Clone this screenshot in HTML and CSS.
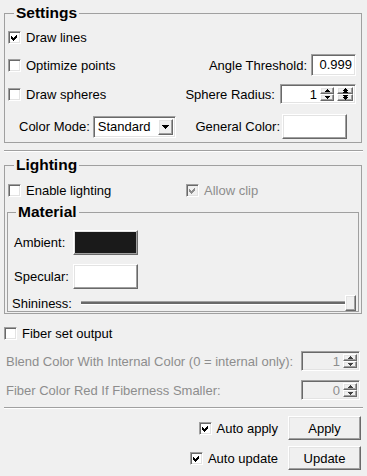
FILE: index.html
```html
<!DOCTYPE html>
<html lang="en">
    <head>
        <meta charset="UTF-8">
        <title>Fiber Settings</title>
        <link rel="stylesheet" href="styles.css">
    </head>
    <body>
        <div class="panel">
            <fieldset class="group">
                <legend>Settings</legend>
                <div class="inner settings">
                    <div class="row r1">
                        <label class="check"><span class="cb"><svg viewBox="0 0 7 7" width="7" height="7"><path d="M0 2L2 4L6 0V3L2 7L0 5Z"/></svg></span>Draw lines</label>
                    </div>
                    <div class="row r2">
                        <label class="check"><span class="cb"></span>Optimize points</label>
                        <div class="field">
                            <span>Angle Threshold:</span>
                            <span class="edit sunken">0.999</span>
                        </div>
                    </div>
                    <div class="row r3">
                        <label class="check"><span class="cb"></span>Draw spheres</label>
                        <div class="field gap5">
                            <span>Sphere Radius:</span>
                            <span class="spin sunken radius">
                                <span class="spin-val">1</span>
                                <span class="spin-btns">
                                    <span class="raised"><svg viewBox="0 0 5 3" width="5" height="3"><path d="M2.5 0L5 3H0Z"/></svg></span>
                                    <span class="raised"><svg viewBox="0 0 5 3" width="5" height="3"><path d="M0 0H5L2.5 3Z"/></svg></span>
                                </span>
                                <span class="spin-btns page">
                                    <span class="raised"><svg viewBox="0 0 7 5" width="7" height="5"><path d="M3.5 0L7 3H0Z M3.5 2L7 5H0Z"/></svg></span>
                                    <span class="raised"><svg viewBox="0 0 7 5" width="7" height="5"><path d="M0 0H7L3.5 3Z M0 2H7L3.5 5Z"/></svg></span>
                                </span>
                            </span>
                        </div>
                    </div>
                    <div class="row r4">
                        <div class="field mode">
                            <span>Color Mode:</span>
                            <span class="combo sunken">
                                <span class="combo-val">Standard</span>
                                <span class="combo-btn raised"><svg viewBox="0 0 7 4" width="7" height="4"><path d="M0 0H7L3.5 4Z"/></svg></span>
                            </span>
                        </div>
                        <div class="field general">
                            <span>General Color:</span>
                            <span class="color-btn raised white"></span>
                        </div>
                    </div>
                </div>
            </fieldset>

            <div class="sep top-sep"></div>

            <fieldset class="group lighting">
                <legend>Lighting</legend>
                <div class="inner">
                    <div class="row enable">
                        <label class="check first"><span class="cb"></span>Enable lighting</label>
                        <label class="check disabled"><span class="cb"><svg viewBox="0 0 7 7" width="7" height="7"><path d="M0 2L2 4L6 0V3L2 7L0 5Z"/></svg></span>Allow clip</label>
                    </div>
                    <fieldset class="group material">
                        <legend>Material</legend>
                        <div class="inner mat">
                            <div class="mrow">
                                <span class="mlabel">Ambient:</span>
                                <span class="color-btn raised black"></span>
                            </div>
                            <div class="mrow spec">
                                <span class="mlabel">Specular:</span>
                                <span class="color-btn raised white"></span>
                            </div>
                            <div class="mrow shine">
                                <span>Shininess:</span>
                                <span class="slider">
                                    <span class="groove"></span>
                                    <span class="handle raised"></span>
                                </span>
                            </div>
                        </div>
                    </fieldset>
                </div>
            </fieldset>

            <div class="row fiber">
                <label class="check"><span class="cb"></span>Fiber set output</label>
            </div>
            <div class="row dim blend">
                <span>Blend Color With Internal Color (0 = internal only):</span>
                <span class="spin sunken off">
                    <span class="spin-val">1</span>
                    <span class="spin-btns">
                        <span class="raised"><svg viewBox="0 0 5 3" width="5" height="3"><path d="M2.5 0L5 3H0Z"/></svg></span>
                        <span class="raised"><svg viewBox="0 0 5 3" width="5" height="3"><path d="M0 0H5L2.5 3Z"/></svg></span>
                    </span>
                </span>
            </div>
            <div class="row dim fcol">
                <span>Fiber Color Red If Fiberness Smaller:</span>
                <span class="spin sunken off">
                    <span class="spin-val">0</span>
                    <span class="spin-btns">
                        <span class="raised"><svg viewBox="0 0 5 3" width="5" height="3"><path d="M2.5 0L5 3H0Z"/></svg></span>
                        <span class="raised"><svg viewBox="0 0 5 3" width="5" height="3"><path d="M0 0H5L2.5 3Z"/></svg></span>
                    </span>
                </span>
            </div>

            <div class="sep bottom-sep"></div>

            <div class="act apply-row">
                <label class="check"><span class="cb"><svg viewBox="0 0 7 7" width="7" height="7"><path d="M0 2L2 4L6 0V3L2 7L0 5Z"/></svg></span>Auto apply</label>
                <button class="btn raised">Apply</button>
            </div>
            <div class="act update-row">
                <label class="check"><span class="cb"><svg viewBox="0 0 7 7" width="7" height="7"><path d="M0 2L2 4L6 0V3L2 7L0 5Z"/></svg></span>Auto update</label>
                <button class="btn raised">Update</button>
            </div>
        </div>
    </body>
</html>
```

FILE: styles.css
```css
* {
    box-sizing: border-box;
}
body {
    margin: 0;
    background-color: #f0f0f0;
    font: 13px "Liberation Sans", Arial, sans-serif;
    color: #000;
}
svg {
    display: block;
    shape-rendering: crispEdges;
}
.panel {
    width: 367px;
    height: 476px;
    padding: 4px 5px 0 4px;
}

/* group boxes */
.group {
    margin: 0;
    padding: 0;
    min-width: 0;
    border: 1px solid #a0a0a0;
}
.group > legend {
    margin-left: 9px;
    padding: 0 2px;
    font: bold 15.5px/18px "Liberation Sans", Arial, sans-serif;
}
.settings {
    padding: 4px 5px 3px 3px;
}
.row {
    display: flex;
    align-items: center;
    justify-content: space-between;
}
.r1 { height: 22px; }
.r2 { height: 22px; margin-top: 6px; }
.r3 { height: 20px; margin-top: 8px; }
.r4 { height: 25px; margin-top: 10px; }

/* 3d borders */
.sunken {
    border: 1px solid;
    border-color: #a0a0a0 #fff #fff #a0a0a0;
    box-shadow: inset 1px 1px #696969, inset -1px -1px #e3e3e3;
    background-color: #fff;
}
.raised {
    border: 1px solid;
    border-color: #fff #696969 #696969 #fff;
    box-shadow: inset -1px -1px #a0a0a0, inset 1px 1px #e3e3e3;
    background-color: #f0f0f0;
}

/* checkbox */
.check {
    display: flex;
    align-items: center;
    gap: 5px;
}
.cb {
    width: 13px;
    height: 13px;
    border: 1px solid;
    border-color: #a0a0a0 #fff #fff #a0a0a0;
    box-shadow: inset 1px 1px #696969, inset -1px -1px #e3e3e3;
    background-color: #fff;
    display: flex;
    align-items: center;
    justify-content: center;
}
.disabled {
    color: #8d8d8d;
}
.disabled .cb {
    background-color: #f0f0f0;
}
.disabled svg {
    fill: #8d8d8d;
}

.field {
    display: flex;
    align-items: center;
    gap: 4px;
}
.gap5 { gap: 5px; }
.edit {
    width: 45px;
    height: 22px;
    padding: 0 3px;
    text-align: right;
    line-height: 20px;
}

/* spin boxes */
.spin {
    display: flex;
    height: 20px;
    padding: 2px 2px 2px 2px;
}
.radius { width: 76px; }
.spin-val {
    flex: 1;
    text-align: right;
    padding-right: 3px;
    line-height: 16px;
}
.spin-btns {
    width: 14px;
    display: flex;
    flex-direction: column;
}
.spin-btns > span {
    flex: 1;
    display: flex;
    align-items: center;
    justify-content: center;
}
.spin-btns.page {
    width: 16px;
    margin-left: 3px;
}
.off {
    width: 59px;
    background-color: #f0f0f0;
    margin-right: 2px;
}
.off .spin-btns svg {
    fill: #404040;
}

/* combo */
.mode {
    margin-left: 11px;
    gap: 3px;
}
.combo {
    width: 83px;
    height: 22px;
    display: flex;
    padding: 2px;
}
.combo-val {
    flex: 1;
    padding-left: 2px;
    line-height: 16px;
}
.combo-btn {
    width: 15px;
    display: flex;
    align-items: center;
    justify-content: center;
}
.general {
    gap: 2px;
    margin-right: 9px;
}
.color-btn {
    display: block;
    width: 65px;
    height: 25px;
}
.white { background-color: #fff; }
.black { background-color: #1a1a1a; }

.sep {
    height: 2px;
    border-top: 1px solid #a0a0a0;
    border-bottom: 1px solid #fff;
    margin-right: -1px;
}
.top-sep {
    margin-top: 7px;
    margin-bottom: 4px;
}

/* lighting */
.lighting > .inner {
    padding: 5px 2px 1px 2px;
}
.enable {
    height: 22px;
    padding-left: 1px;
    justify-content: flex-start;
}
.first {
    width: 178px;
}
.material {
    margin-top: 2px;
}
.material > legend {
    margin-left: 8px;
}
.mat {
    padding: 9px 2px 0 6px;
}
.mrow {
    display: flex;
    align-items: center;
    height: 25px;
}
.mlabel {
    width: 59px;
}
.spec {
    margin-top: 9px;
}
.shine {
    height: 16px;
    margin-top: 6px;
    margin-left: -2px;
}
.slider {
    flex: 1;
    margin-left: 9px;
    display: flex;
    align-items: center;
}
.groove {
    flex: 1;
    height: 4px;
    border-top: 1px solid #a0a0a0;
    border-bottom: 1px solid #fff;
    background-color: #696969;
    box-shadow: 0 -1px #f0f0f0;
}
.handle {
    width: 11px;
    height: 16px;
}

/* fiber rows */
.fiber {
    height: 20px;
    margin-top: 9px;
    justify-content: flex-start;
}
.dim {
    color: #8d8d8d;
    padding-left: 2px;
}
.blend {
    height: 20px;
    margin-top: 8px;
}
.fcol {
    height: 20px;
    margin-top: 9px;
}
.bottom-sep {
    margin-top: 7px;
}

/* bottom buttons */
.act {
    display: flex;
    align-items: center;
    justify-content: flex-end;
    gap: 10px;
    height: 24px;
    margin-right: 1px;
}
.apply-row { margin-top: 7px; }
.update-row { margin-top: 6px; }
.btn {
    width: 73px;
    height: 24px;
    padding: 0;
    font: 13px "Liberation Sans", Arial, sans-serif;
    color: #000;
}
```
